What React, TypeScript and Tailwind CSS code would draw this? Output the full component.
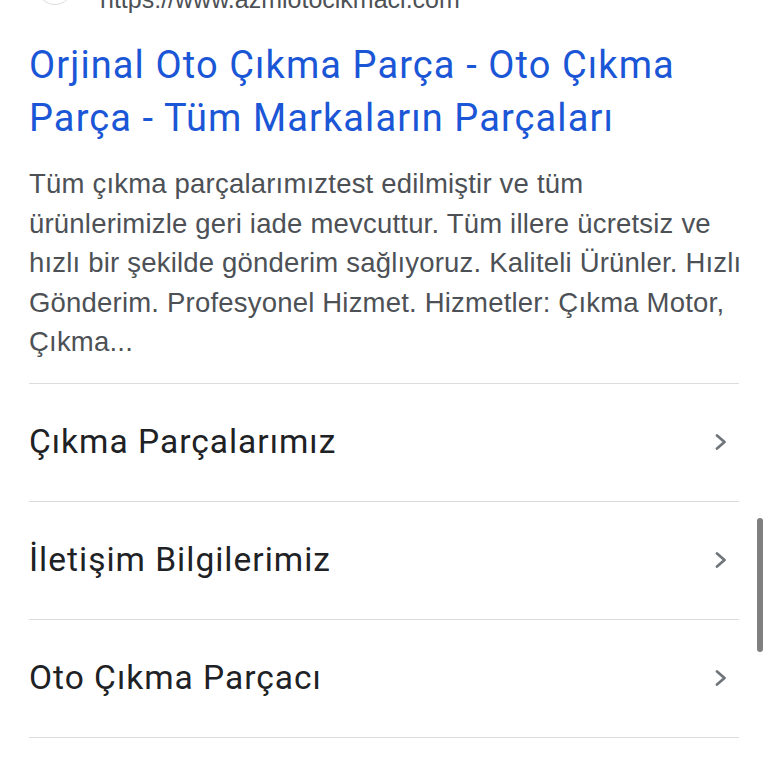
import React from 'react';

const items = ['Çıkma Parçalarımız', 'İletişim Bilgilerimiz', 'Oto Çıkma Parçacı'];

const titleLines = ['Orjinal Oto Çıkma Parça - Oto Çıkma', 'Parça - Tüm Markaların Parçaları'];

const snippetLines = [
  'Tüm çıkma parçalarımıztest edilmiştir ve tüm',
  'ürünlerimizle geri iade mevcuttur. Tüm illere ücretsiz ve',
  'hızlı bir şekilde gönderim sağlıyoruz. Kaliteli Ürünler. Hızlı',
  'Gönderim. Profesyonel Hizmet. Hizmetler: Çıkma Motor,',
  'Çıkma...',
];

const Chevron: React.FC = () => (
  <svg width="14" height="16" viewBox="0 0 14 16" fill="none">
    <path d="M3 1.5 L10.5 8 L3 14.5" stroke="#70757a" strokeWidth="2.7" strokeLinecap="round" strokeLinejoin="round" />
  </svg>
);

const App: React.FC = () => {
  return (
    <div className="relative h-[768px] w-full overflow-hidden bg-white">
      <div className="px-[29px]">
        {/* site row, mostly scrolled off the top */}
        <div className="-mt-[24px] flex h-[36px] items-end">
          <div className="mb-[7px] ml-[8px] h-[36px] w-[36px] shrink-0 rounded-full border border-[#dadce0]" />
          <span
            className="ml-[27px] text-[25px] leading-none text-[#4d5156]"
            style={{ fontFamily: '"Liberation Sans", Arial, sans-serif' }}
          >
            https://www.azmiotocikmaci.com
          </span>
        </div>

        <h3
          className="mt-[27px] text-[38px] leading-[53px] font-normal tracking-[1.1px] text-[#1a56d6]"
          style={{ fontFamily: 'Roboto, "Noto Sans", sans-serif' }}
        >
          {titleLines.map((line) => (
            <span key={line} className="block whitespace-nowrap">
              {line}
            </span>
          ))}
        </h3>

        <p
          className="mt-[19px] text-[27.5px] leading-[39.5px] tracking-[0.2px] text-[#4d5156]"
          style={{ fontFamily: '"Liberation Sans", Arial, sans-serif' }}
        >
          {snippetLines.map((line) => (
            <span key={line} className="block whitespace-nowrap">
              {line}
            </span>
          ))}
        </p>

        <div className="mt-[21px] border-t border-[#dadce0]">
          {items.map((label) => (
            <div
              key={label}
              className="flex h-[118px] items-center justify-between border-b border-[#dadce0] pr-[11px]"
            >
              <span
                className="text-[33.5px] tracking-[1px] text-[#202124]"
                style={{ fontFamily: 'Roboto, "Noto Sans", sans-serif' }}
              >
                {label}
              </span>
              <Chevron />
            </div>
          ))}
        </div>
      </div>

      <div className="absolute right-[5px] top-[518px] h-[134px] w-[6px] rounded-full bg-[#808080]" />
    </div>
  );
};

export default App;
